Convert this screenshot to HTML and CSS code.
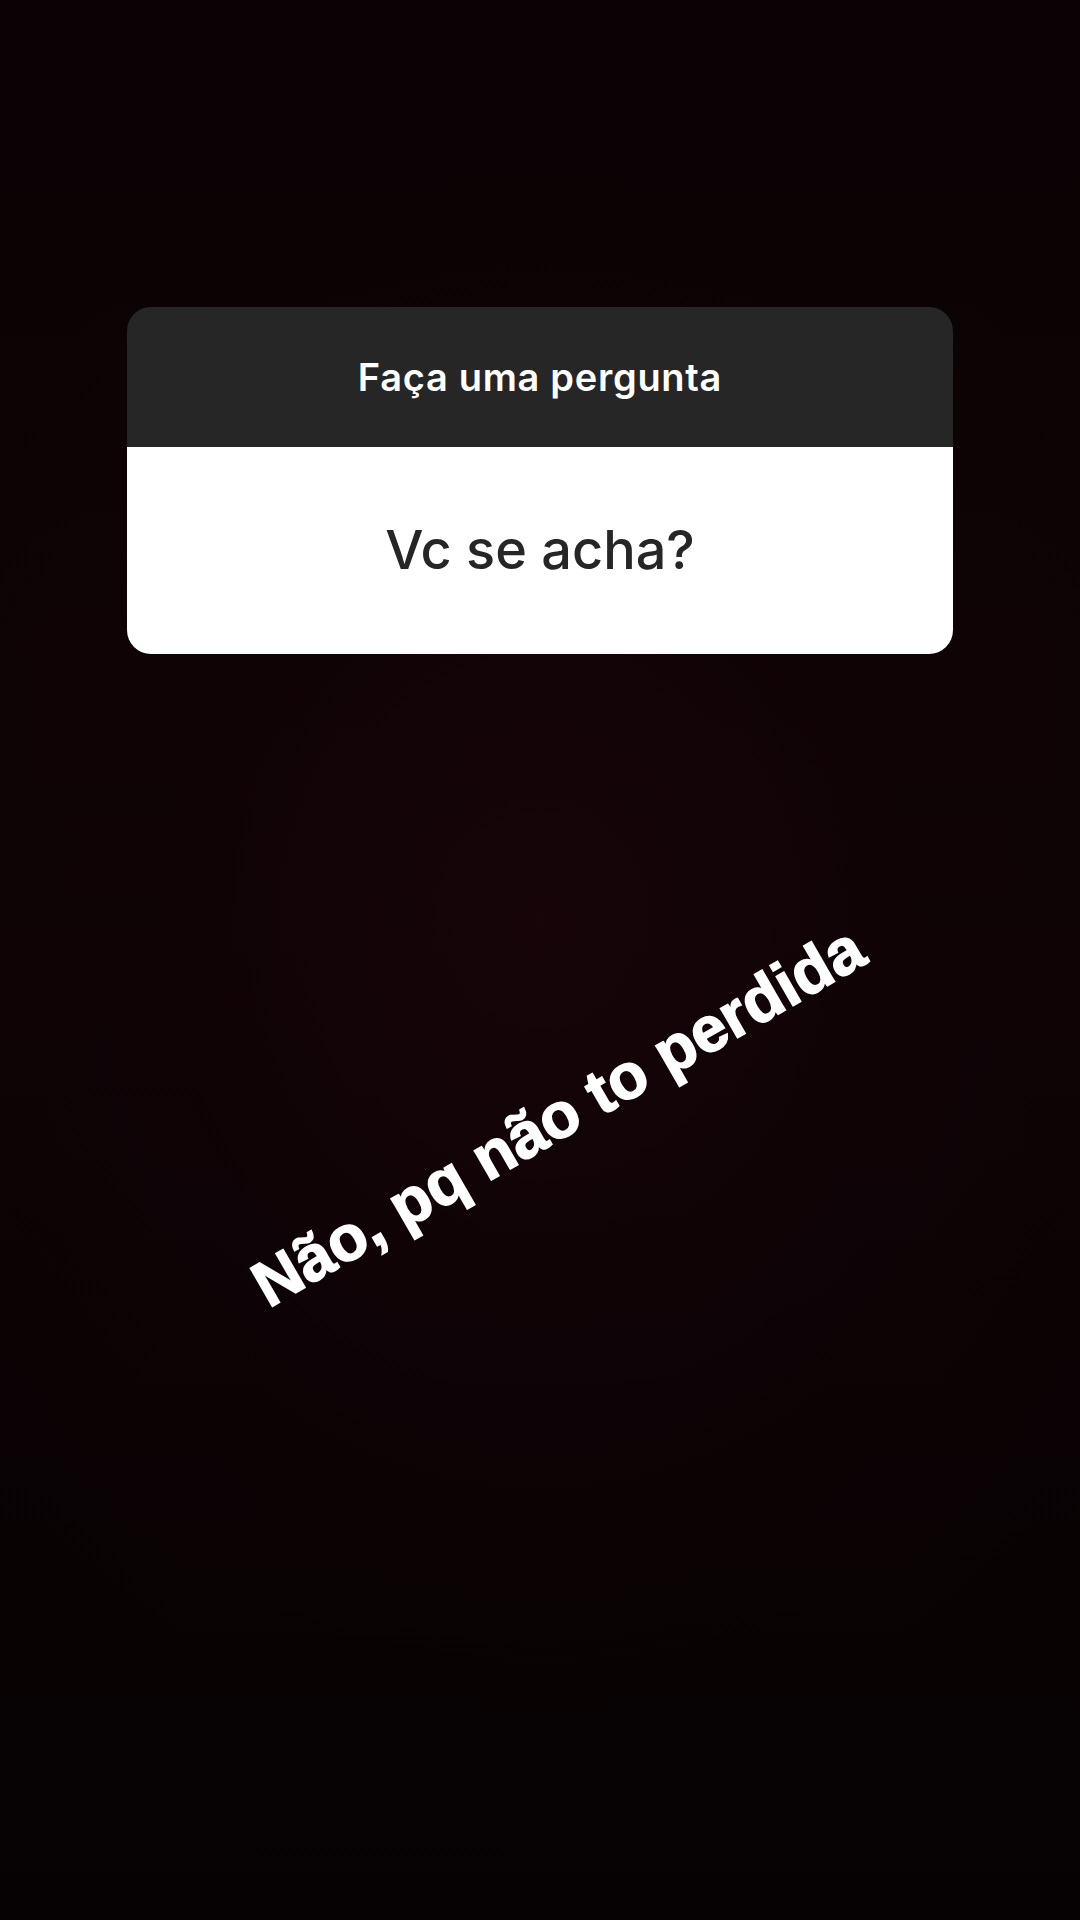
FILE: index.html
```html
<!DOCTYPE html>
<html lang="pt">
<head>
<meta charset="utf-8">
<title>Story</title>
<link rel="stylesheet" href="styles.css">
</head>
<body>
<main class="story">
  <section class="question-card">
    <header class="question-head">Faça uma pergunta</header>
    <div class="question-body">Vc se acha?</div>
  </section>
  <p class="answer">Não, pq não to perdida</p>
</main>
</body>
</html>
```
FILE: styles.css
```css
html, body {
  margin: 0;
  padding: 0;
  background: #070203;
}

.story {
  position: relative;
  width: 1080px;
  height: 1920px;
  overflow: hidden;
  box-sizing: border-box;
  padding: 307px 127px 0;
  background:
    radial-gradient(ellipse 70% 45% at 50% 48%, rgba(24, 5, 9, 0.85) 0%, rgba(16, 3, 6, 0.55) 50%, rgba(10, 2, 4, 0) 100%),
    linear-gradient(180deg, #0a0204 0%, #0e0305 45%, #0a0204 75%, #060203 100%);
  font-family: Inter, "Noto Sans", "Liberation Sans", sans-serif;
}

.question-card {
  width: 826px;
  border-radius: 24px;
  overflow: hidden;
  display: flex;
  flex-direction: column;
}

.question-head {
  height: 140px;
  background: #262626;
  color: #ffffff;
  display: flex;
  align-items: center;
  justify-content: center;
  font-size: 38px;
  font-weight: 600;
  letter-spacing: 0.7px;
}

.question-body {
  height: 207px;
  background: #ffffff;
  color: #262626;
  display: flex;
  align-items: center;
  justify-content: center;
  font-size: 54px;
  font-weight: 500;
  padding-bottom: 2px;
  box-sizing: border-box;
}

.answer {
  position: absolute;
  left: 558px;
  top: 1116px;
  margin: 0;
  white-space: nowrap;
  color: #ffffff;
  font-family: "Liberation Sans", Arial, sans-serif;
  font-weight: 700;
  font-size: 64px;
  line-height: 1;
  -webkit-text-stroke: 1.5px #ffffff;
  transform: translate(-50%, -50%) rotate(-30deg);
}
```
